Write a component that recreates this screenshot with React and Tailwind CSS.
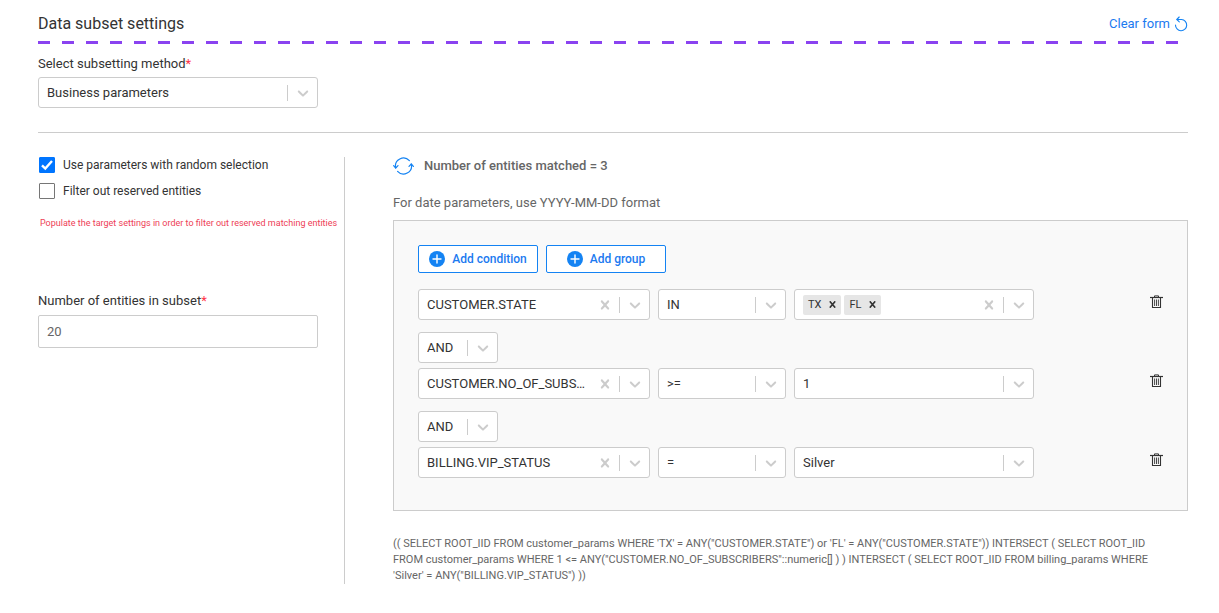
const CHEVRON =
  'M4.516 7.548c0.436-0.446 1.043-0.481 1.576 0l3.908 3.747 3.908-3.747c0.533-0.481 1.141-0.446 1.574 0 0.436 0.445 0.408 1.197 0 1.615-0.406 0.418-4.695 4.502-4.695 4.502-0.217 0.223-0.502 0.335-0.787 0.335s-0.57-0.112-0.789-0.335c0 0-4.287-4.084-4.695-4.502s-0.436-1.17 0-1.615z';
const CROSS =
  'M14.348 14.849c-0.469 0.469-1.229 0.469-1.697 0l-2.651-3.030-2.651 3.029c-0.469 0.469-1.229 0.469-1.697 0-0.469-0.469-0.469-1.229 0-1.697l2.758-3.15-2.759-3.152c-0.469-0.469-0.469-1.228 0-1.697s1.228-0.469 1.697 0l2.652 3.031 2.651-3.031c0.469-0.469 1.228-0.469 1.697 0s0.469 1.229 0 1.697l-2.758 3.152 2.758 3.15c0.469 0.469 0.469 1.229 0 1.698z';

function Glyph({ d, className }) {
  return (
    <svg viewBox="0 0 20 20" fill="currentColor" className={className} aria-hidden="true">
      <path d={d} />
    </svg>
  );
}

function SelectBox({ id, label, value, clearable, chips, className }) {
  return (
    <div className={`flex h-[31px] items-center rounded-[3px] border border-[#ccc] bg-white ${className}`}>
      {chips && (
        <div className="flex gap-[3px] pl-2">
          {chips.map((chip) => (
            <span key={chip} className="flex h-5 items-center rounded-[2px] bg-[#e6e6e6] pl-[5px] text-[11px] text-[#333]">
              {chip}
              <button type="button" aria-label={`Remove ${chip}`} className="ml-1 flex h-5 w-4 items-center pl-px">
                <Glyph d={CROSS} className="size-[13px]" />
              </button>
            </span>
          ))}
        </div>
      )}
      <select
        id={id}
        aria-label={id ? undefined : label}
        defaultValue={value}
        className="h-full min-w-0 flex-1 appearance-none overflow-hidden bg-transparent pl-2 text-ellipsis text-[#333] outline-none"
      >
        <option value={value}>{value}</option>
      </select>
      {clearable && (
        <button type="button" aria-label={`Clear ${label}`} className="flex w-7 justify-center text-[#ccc]">
          <Glyph d={CROSS} className="size-[18px]" />
        </button>
      )}
      <span className="h-4 w-px bg-[#ccc]" />
      <span className="flex w-[29px] justify-center text-[#ccc]">
        <Glyph d={CHEVRON} className="size-[18px]" />
      </span>
    </div>
  );
}

function CheckBox({ label, defaultChecked }) {
  return (
    <label className="flex items-center gap-2">
      <span className="grid size-4">
        <input
          type="checkbox"
          defaultChecked={defaultChecked}
          className="peer col-start-1 row-start-1 size-4 appearance-none rounded-[1px] border border-[#767676] bg-white checked:border-[#0075ff] checked:bg-[#0075ff]"
        />
        <svg
          viewBox="0 0 16 16"
          className="pointer-events-none invisible col-start-1 row-start-1 size-4 peer-checked:visible"
          fill="none"
          stroke="#fff"
          strokeWidth="2.4"
          aria-hidden="true"
        >
          <path d="M3 8.300l3.300 3.200L13 4" />
        </svg>
      </span>
      {label}
    </label>
  );
}

function PlusIcon() {
  return (
    <svg viewBox="0 0 16 16" className="size-4" aria-hidden="true">
      <circle cx="8" cy="8" r="8" fill="#1483f3" />
      <path d="M8 4v8M4 8h8" stroke="#fff" strokeWidth="1.4" strokeLinecap="round" />
    </svg>
  );
}

function TrashIcon() {
  return (
    <svg viewBox="0 0 13 14" className="h-[14px] w-[13px]" fill="none" stroke="#333" aria-hidden="true">
      <path d="M0 2.5h13" strokeWidth="1.2" />
      <path d="M4.500 2V.9h4V2" />
      <path d="M2.500 3v9.500h8V3" strokeWidth="1.1" />
      <path d="M4.600 4.500v6.500M6.500 4.500v6.500M8.400 4.500v6.500" strokeWidth="0.9" />
    </svg>
  );
}

function RefreshIcon() {
  return (
    <svg viewBox="0 0 21 18" className="h-[18px] w-[21px]" fill="none" stroke="#1483f3" strokeWidth="1.2" strokeLinecap="round" strokeLinejoin="round" aria-hidden="true">
      <path d="M2.700 10.800A8 8 0 0 1 16.400 3.600" />
      <path d="M18.300 7.200A8 8 0 0 1 4.600 14.400" />
      <path d="M.6 8.700l2.100 2.300 2.300-2.300" />
      <path d="M20.400 9.300l-2.100-2.300-2.300 2.300" />
    </svg>
  );
}

function ResetIcon() {
  return (
    <svg viewBox="0 0 14 16" className="h-4 w-[14px]" fill="none" stroke="#1483f3" strokeWidth="1.1" strokeLinecap="round" strokeLinejoin="round" aria-hidden="true">
      <path d="M3 3.500H7.500A5.600 5.600 0 1 1 1.500 9" />
      <path d="M5.200 1L2.800 3.500l2.500 2.300" />
    </svg>
  );
}

function AddButton({ children }) {
  return (
    <button type="button" className="flex h-7 w-[120px] items-center justify-center gap-[7px] rounded-[2px] border border-[#1483f3] bg-white text-[12px] font-medium text-[#1c7af0]">
      <PlusIcon />
      {children}
    </button>
  );
}

function Condition({ field, operator, value, chips }) {
  return (
    <div className="flex items-center gap-2">
      <SelectBox label="Parameter" value={field} clearable className="w-[232px]" />
      <SelectBox label="Operator" value={operator} className="w-32" />
      <SelectBox label="Value" value={value} chips={chips} clearable={Boolean(chips)} className="w-60" />
      <button type="button" aria-label="Delete condition" className="mb-[5px] ml-auto">
        <TrashIcon />
      </button>
    </div>
  );
}

function Joiner() {
  return (
    <div className="pt-3 pb-[5px]">
      <SelectBox label="Combinator" value="AND" className="w-20" />
    </div>
  );
}

export default function App() {
  return (
    <main className="pr-[31px] pb-[30px] pl-[38px] font-[Roboto,sans-serif] text-[13px] leading-4 text-[#333]">
      <header className="flex h-[41px] items-center justify-between pt-[6px]">
        <h1 className="text-[16px]">Data subset settings</h1>
        <button type="button" className="flex items-center gap-1 text-[#1c7af0]">
          Clear form
          <ResetIcon />
        </button>
      </header>
      <div className="h-[3px] bg-[repeating-linear-gradient(90deg,#8a43f0_0_12px,transparent_12px_24px)]" />

      <section className="border-b border-[#ccc] pt-3 pb-6">
        <label htmlFor="method" className="mb-[5px] block">
          Select subsetting method<span className="text-[#ff3347]">*</span>
        </label>
        <SelectBox id="method" value="Business parameters" className="w-[280px]" />
      </section>

      <div className="flex pt-6">
        <section className="w-[307px] shrink-0 border-r border-[#ccc]">
          <div className="flex flex-col gap-[10px] pl-px text-[12px]">
            <CheckBox label="Use parameters with random selection" defaultChecked />
            <CheckBox label="Filter out reserved entities" />
          </div>
          <p className="mt-4 pl-[2px] text-[9px] text-[#ee4056]">
            Populate the target settings in order to filter out reserved matching entities
          </p>
          <label htmlFor="count" className="mt-[62px] mb-[6px] block">
            Number of entities in subset<span className="text-[#ff3347]">*</span>
          </label>
          <input
            id="count"
            type="text"
            defaultValue="20"
            className="h-[33px] w-[280px] rounded-[2px] border border-[#ccc] px-2 text-[#666] outline-none"
          />
        </section>

        <section className="min-w-0 flex-1 pl-12 text-[#666]">
          <div className="flex items-center gap-[10px] font-medium">
            <button type="button" aria-label="Refresh matched entities">
              <RefreshIcon />
            </button>
            Number of entities matched = 3
          </div>
          <p className="mt-5">For date parameters, use YYYY-MM-DD format</p>
          <div className="mt-[9px] border border-[#ccc] bg-[#f9f9f9] px-6 pt-6 pb-8">
            <div className="mb-4 flex gap-2">
              <AddButton>Add condition</AddButton>
              <AddButton>Add group</AddButton>
            </div>
            <Condition field="CUSTOMER.STATE" operator="IN" value="" chips={['TX', 'FL']} />
            <Joiner />
            <Condition field="CUSTOMER.NO_OF_SUBSCRIBERS" operator=">=" value="1" />
            <Joiner />
            <Condition field="BILLING.VIP_STATUS" operator="=" value="Silver" />
          </div>
          <p className="mt-[25px] pr-5 text-[11px]">
            {`(( SELECT ROOT_IID FROM customer_params WHERE 'TX' = ANY("CUSTOMER.STATE") or 'FL' = ANY("CUSTOMER.STATE")) INTERSECT ( SELECT ROOT_IID FROM customer_params WHERE 1 <= ANY("CUSTOMER.NO_OF_SUBSCRIBERS"::numeric[] ) ) INTERSECT ( SELECT ROOT_IID FROM billing_params WHERE 'Silver' = ANY("BILLING.VIP_STATUS") ))`}
          </p>
        </section>
      </div>
    </main>
  );
}
